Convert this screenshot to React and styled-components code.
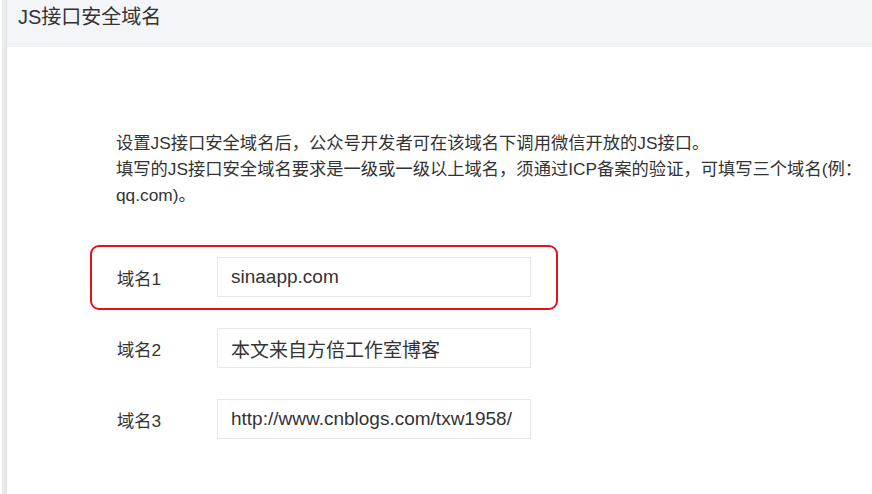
import React from "react";
import styled, { createGlobalStyle } from "styled-components";

const GlobalStyle = createGlobalStyle`
  html, body {
    margin: 0;
    padding: 0;
    background: #ffffff;
  }
  body {
    font-family: "Liberation Sans", "Noto Sans CJK SC", sans-serif;
    color: #333333;
    overflow: hidden;
  }
  * { box-sizing: border-box; }
`;

const Shell = styled.div`
  display: flex;
  min-height: 100vh;
  padding-left: 2px;
  background: #ffffff;
`;

const SideRule = styled.div`
  width: 5px;
  flex: none;
  background: #ebebee;
  border-right: 1px solid #e1e1e5;
`;

const Panel = styled.main`
  flex: 1;
  min-width: 0;
  display: flex;
  flex-direction: column;
`;

const Header = styled.header`
  height: 47px;
  padding: 4px 0 0 11px;
  background: #f4f5f9;
  border-bottom: 1px solid #eef0f4;
`;

const Title = styled.h2`
  margin: 0;
  font-size: 20px;
  font-weight: normal;
  line-height: 26px;
  color: #333333;
`;

const Content = styled.section`
  padding: 83px 0 0 109px;
`;

const Description = styled.p`
  margin: 0;
  font-size: 17.3px;
  line-height: 26px;
  white-space: nowrap;
  color: #333333;
`;

const Form = styled.div`
  margin-top: 49px;
  display: flex;
  flex-direction: column;
  gap: 31px;
`;

const Row = styled.div`
  position: relative;
  display: flex;
  align-items: center;
  height: 40px;
`;

const Label = styled.label`
  width: 101px;
  padding-left: 1px;
  flex: none;
  font-size: 17.3px;
  color: #333333;
`;

const Field = styled.input`
  width: 314px;
  height: 40px;
  padding: 0 13px;
  border: 1px solid #e6e6ea;
  background: #ffffff;
  font-family: "Liberation Sans", "Noto Sans CJK SC", sans-serif;
  font-size: 19px;
  color: #333333;
  outline: none;
`;

const Highlight = styled.div`
  position: absolute;
  left: -26px;
  top: -12px;
  width: 468px;
  height: 65px;
  border: 2px solid #e5121d;
  border-radius: 9px;
  pointer-events: none;
`;

const domains = [
  { id: 1, value: "sinaapp.com", highlight: true },
  { id: 2, value: "本文来自方倍工作室博客" },
  { id: 3, value: "http://www.cnblogs.com/txw1958/" },
];

export default function App() {
  return (
    <>
      <GlobalStyle />
      <Shell>
        <SideRule />
        <Panel>
          <Header>
            <Title>JS接口安全域名</Title>
          </Header>
          <Content>
            <Description>
              设置JS接口安全域名后，公众号开发者可在该域名下调用微信开放的JS接口。
              <br />
              填写的JS接口安全域名要求是一级或一级以上域名，须通过ICP备案的验证，可填写三个域名(例：
              <br />
              qq.com)。
            </Description>
            <Form>
              {domains.map((d) => (
                <Row key={d.id}>
                  <Label htmlFor={`domain-${d.id}`}>域名{d.id}</Label>
                  <Field id={`domain-${d.id}`} defaultValue={d.value} readOnly />
                  {d.highlight && <Highlight />}
                </Row>
              ))}
            </Form>
          </Content>
        </Panel>
      </Shell>
    </>
  );
}
